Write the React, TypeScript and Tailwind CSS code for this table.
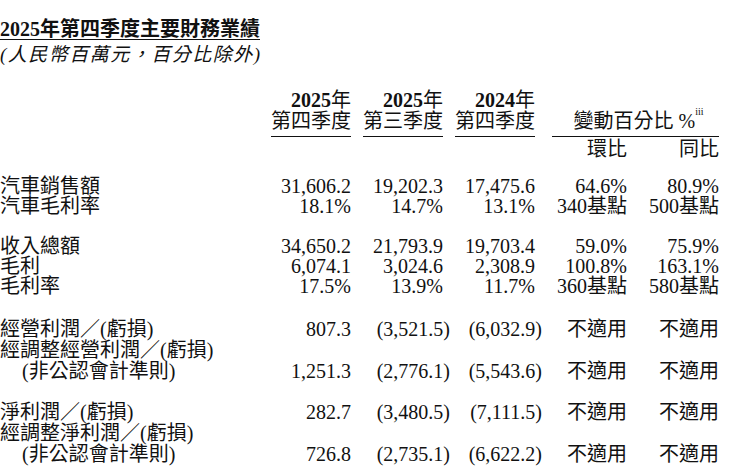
import type React from "react";

type Row = {
  label: string | [string, string];
  values: string[];
};

const groups: Row[][] = [
  [
    { label: "汽車銷售額", values: ["31,606.2", "19,202.3", "17,475.6", "64.6%", "80.9%"] },
    { label: "汽車毛利率", values: ["18.1%", "14.7%", "13.1%", "340基點", "500基點"] },
  ],
  [
    { label: "收入總額", values: ["34,650.2", "21,793.9", "19,703.4", "59.0%", "75.9%"] },
    { label: "毛利", values: ["6,074.1", "3,024.6", "2,308.9", "100.8%", "163.1%"] },
    { label: "毛利率", values: ["17.5%", "13.9%", "11.7%", "360基點", "580基點"] },
  ],
  [
    { label: "經營利潤／(虧損)", values: ["807.3", "(3,521.5)", "(6,032.9)", "不適用", "不適用"] },
    {
      label: ["經調整經營利潤／(虧損)", "(非公認會計準則)"],
      values: ["1,251.3", "(2,776.1)", "(5,543.6)", "不適用", "不適用"],
    },
  ],
  [
    { label: "淨利潤／(虧損)", values: ["282.7", "(3,480.5)", "(7,111.5)", "不適用", "不適用"] },
    {
      label: ["經調整淨利潤／(虧損)", "(非公認會計準則)"],
      values: ["726.8", "(2,735.1)", "(6,622.2)", "不適用", "不適用"],
    },
  ],
];

const groupGap = ["mt-[17px]", "mt-[20px]", "mt-[23px]", "mt-[20px]"];

function Value({ v }: { v: string }) {
  // negatives keep the closing paren hanging past the column edge
  if (v.startsWith("(") && v.endsWith(")")) {
    return (
      <>
        {v.slice(0, -1)}
        <span className="-mr-[7px]">)</span>
      </>
    );
  }
  return <>{v}</>;
}

function QuarterHead({ year, quarter }: { year: string; quarter: string }) {
  return (
    <div className="flex flex-col items-end">
      <div className="inline-flex flex-col items-end border-b-[1.5px] border-[#111] pb-[4px]">
        <span className="leading-[21px]">
          <span className="font-bold">{year}</span>年
        </span>
        <span className="leading-[21px]">{quarter}</span>
      </div>
    </div>
  );
}

export default function App() {
  return (
    <div className="w-[749px] h-[475px] overflow-hidden bg-white text-[#111] font-['Liberation_Serif','Noto_Sans_CJK_TC',serif] text-[20px]">
      <div className="pt-[19px]">
        <h1 className="w-fit border-b-[1.5px] border-[#111] text-[20px] leading-[20px] font-bold">
          2025年第四季度主要財務業績
        </h1>
        <p className="mt-[4px] italic text-[19px] leading-[22px] tracking-[1.5px]">
          (人民幣百萬元，百分比除外)
        </p>
      </div>

      <div className="mt-[24px] grid grid-cols-[259px_92px_92px_92px_92px_92px]">
        <div />
        <QuarterHead year="2025" quarter="第四季度" />
        <div className="pl-[9px]">
          <QuarterHead year="2025" quarter="第三季度" />
        </div>
        <QuarterHead year="2024" quarter="第四季度" />
        <div className="col-span-2 ml-[17px] flex flex-col items-center border-b-[1.5px] border-[#111] pb-[4px]">
          <span className="h-[21px]" />
          <span className="leading-[21px] pl-[6px]">
            變動百分比 %<sup className="text-[10px] align-[8px]">iii</sup>
          </span>
        </div>
        <div className="col-span-4" />
        <div className="text-right leading-[20px] mt-[2px]">環比</div>
        <div className="text-right leading-[20px] mt-[2px]">同比</div>
      </div>

      {groups.map((rows, gi) => (
        <div key={gi} className={groupGap[gi]}>
          {rows.map((row, ri) => {
            const lh = gi < 2 ? "leading-[20px]" : "leading-[21px]";
            return (
              <div
                key={ri}
                className={`grid grid-cols-[259px_92px_92px_92px_92px_92px] items-end whitespace-nowrap ${lh}`}
              >
                {Array.isArray(row.label) ? (
                  <div>
                    <div>{row.label[0]}</div>
                    <div className="pl-[22px]">{row.label[1]}</div>
                  </div>
                ) : (
                  <div>{row.label}</div>
                )}
                {row.values.map((v, vi) => (
                  <div key={vi} className="text-right">
                    <Value v={v} />
                  </div>
                ))}
              </div>
            );
          })}
        </div>
      ))}
    </div>
  );
}
